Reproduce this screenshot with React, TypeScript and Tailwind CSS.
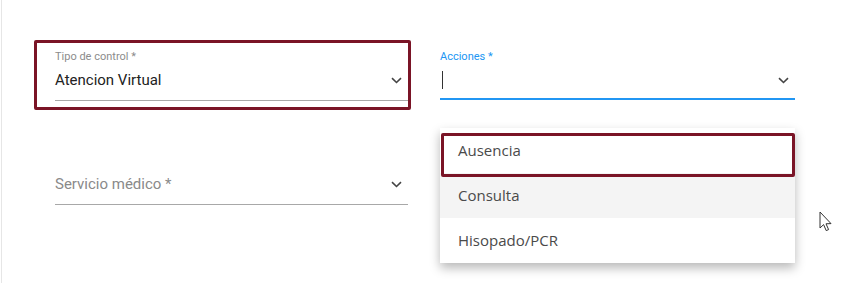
import React from 'react';

function Chevron() {
  return (
    <svg width="11" height="7" viewBox="0 0 11 7" className="shrink-0">
      <path d="M1 1.2 L5.5 5.5 L10 1.2" fill="none" stroke="#444" strokeWidth="1.6" />
    </svg>
  );
}

function SelectField({
  label,
  value,
  placeholder,
  focused,
}: {
  label?: string;
  value?: string;
  placeholder?: string;
  focused?: boolean;
}) {
  return (
    <div
      className={`flex flex-col ${
        focused ? 'border-b-2 border-[#2196f3]' : 'border-b border-[#a8a8a8]'
      }`}
    >
      <div
        className={`h-[14px] text-[11px] leading-[14px] ${focused ? 'text-[#2196f3]' : 'text-[#8c8c8c]'}`}
      >
        {label}
      </div>
      <div className="mt-[4px] flex h-[24px] items-center justify-between pr-[6px]">
        {value && <span className="text-[15px] text-[#222]">{value}</span>}
        {placeholder && <span className="text-[15px] text-[#8a8a8a]">{placeholder}</span>}
        {focused && <span className="ml-[2px] h-[18px] w-px bg-[#333]" />}
        <Chevron />
      </div>
      <div className={focused ? 'h-[6px]' : 'h-[8px]'} />
    </div>
  );
}

const options = ['Ausencia', 'Consulta', 'Hisopado/PCR'];

export default function App() {
  return (
    <div className="relative h-[283px] w-[843px] overflow-hidden bg-white font-['Roboto',sans-serif]">
      <div className="ml-px h-full border-l border-[#e6e6e6]">
        <div className="grid grid-cols-[353px_355px] gap-x-[32px] gap-y-[53px] pl-[53px] pt-[50px]">
          <SelectField label="Tipo de control *" value="Atencion Virtual" />
          <div className="relative">
            <SelectField label="Acciones *" focused />
            <div className="absolute left-0 top-[78px] z-10 w-full bg-white font-['Open_Sans',sans-serif] shadow-[0_5px_10px_rgba(0,0,0,0.28)]">
              {options.map((o) => (
                <div
                  key={o}
                  className={`flex h-[45px] items-center pl-[18px] text-[15px] text-[#4a4a4a] ${
                    o === 'Consulta' ? 'bg-[#f4f4f4]' : ''
                  }`}
                >
                  {o}
                </div>
              ))}
              <div className="absolute left-px top-[5px] h-[44px] w-[354px] rounded-[2px] border-[3px] border-[#7a1426]" />
            </div>
          </div>
          <SelectField placeholder="Servicio médico *" />
          <div />
        </div>
      </div>

      {/* annotation around first field */}
      <div className="absolute left-[34px] top-[40px] h-[70px] w-[377px] rounded-[2px] border-[3px] border-[#7a1426]" />

      {/* mouse pointer */}
      <svg className="absolute left-[819px] top-[211px]" width="14" height="22" viewBox="0 0 14 22">
        <path
          d="M1 1 L1 17 L4.6 13.6 L7.2 19.6 L9.6 18.6 L7 12.8 L12 12.6 Z"
          fill="#fff"
          stroke="#333"
          strokeWidth="1"
          strokeLinejoin="round"
        />
      </svg>
    </div>
  );
}
